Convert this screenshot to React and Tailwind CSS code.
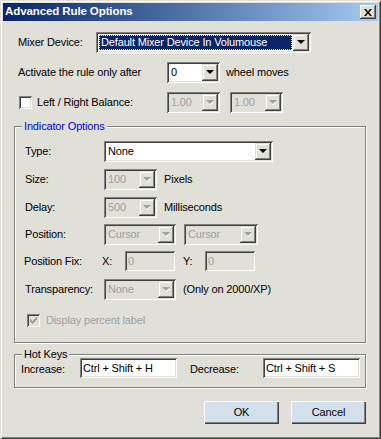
import React from "react";

const BG = "bg-[#e0dfd8]";

function Arrow({ disabled }) {
  return (
    <svg width="8" height="5" viewBox="0 0 8 5" className="block">
      {disabled && <path d="M2 2h5v1h-1v1h-1v1h-1z" fill="#ffffff" />}
      <path d="M0.5 0h7v1h-1v1h-1v1h-1v1h-1v-1h-1v-1h-1v-1h-1z" fill={disabled ? "#a0a0a0" : "#000"} />
    </svg>
  );
}

function DropBtn({ disabled }) {
  return (
    <div className="w-[16px] h-full bg-[#e0dfd8] flex items-center justify-center shadow-[inset_-1px_-1px_0_#404040,inset_1px_1px_0_#e0dfd8,inset_-2px_-2px_0_#808080,inset_2px_2px_0_#ffffff]">
      <Arrow disabled={disabled} />
    </div>
  );
}

const sunken =
  "shadow-[inset_1px_1px_0_#808080,inset_-1px_-1px_0_#ffffff,inset_2px_2px_0_#404040,inset_-2px_-2px_0_#e0dfd8] p-[2px]";

function Combo({ w, value, disabled, selected }) {
  return (
    <div
      className={`${sunken} h-[21px] flex shrink-0 ${disabled ? "bg-[#e0dfd8]" : "bg-white"}`}
      style={{ width: w }}
    >
      <div className="flex-1 min-w-0 flex items-center">
        {selected ? (
          <div className="ml-[1px] mr-[1px] h-[15px] flex-1 bg-[#0a246a] border border-dotted border-[#e8e0a0] text-white flex items-center pl-[1px] leading-none whitespace-nowrap overflow-hidden">
            {value}
          </div>
        ) : (
          <span className={`pl-[2px] leading-none whitespace-nowrap ${disabled ? "text-[#a0a0a0]" : "text-black"}`}>
            {value}
          </span>
        )}
      </div>
      <DropBtn disabled={disabled} />
    </div>
  );
}

function TextBox({ w, value, disabled }) {
  return (
    <div
      className={`${sunken} h-[20px] flex items-center shrink-0 ${disabled ? "bg-[#e0dfd8] text-[#a0a0a0]" : "bg-white text-black"}`}
      style={{ width: w }}
    >
      <span className="pl-[1px] leading-none whitespace-nowrap">{value}</span>
    </div>
  );
}

function Check({ checked, disabled }) {
  return (
    <div
      className={`w-[13px] h-[13px] shrink-0 flex items-center justify-center shadow-[inset_1px_1px_0_#808080,inset_-1px_-1px_0_#ffffff,inset_2px_2px_0_#404040,inset_-2px_-2px_0_#e0dfd8] ${disabled ? "bg-[#e0dfd8]" : "bg-white"}`}
    >
      {checked && (
        <svg width="7" height="7" viewBox="0 0 7 7" className="block">
          <path d="M0 2h1v1h1v1h1v-1h1v-1h1v-1h1v-1h1v3h-1v1h-1v1h-1v1h-1v1h-1v-1h-1v-1h-1z" fill={disabled ? "#a0a0a0" : "#000"} />
        </svg>
      )}
    </div>
  );
}

function Button({ children }) {
  return (
    <div className="w-[75px] h-[23px] bg-[#d4e0ec] flex items-center justify-center text-black shadow-[inset_1px_1px_0_#ffffff,inset_-1px_-1px_0_#404040,inset_-2px_-2px_0_#808080]">
      {children}
    </div>
  );
}

export default function App() {
  return (
    <div
      className={`w-[381px] h-[439px] ${BG} p-[3px] shadow-[inset_1px_1px_0_#e0dfd8,inset_-1px_-1px_0_#404040,inset_2px_2px_0_#ffffff,inset_-2px_-2px_0_#808080] text-[11px] tracking-[-0.15px] text-black`}
      style={{ fontFamily: '"Liberation Sans", Arial, sans-serif' }}
    >
      {/* Title bar */}
      <div className="h-[18px] bg-gradient-to-r from-[#0a246a] to-[#a6caf0] flex items-center justify-between pl-[2px] pr-[2px]">
        <span className="text-white font-bold text-[11.5px] tracking-[-0.1px] leading-none">Advanced Rule Options</span>
        <div className="w-[16px] h-[14px] bg-[#e0dfd8] flex items-center justify-center shadow-[inset_-1px_-1px_0_#404040,inset_1px_1px_0_#ffffff,inset_-2px_-2px_0_#808080]">
          <svg width="8" height="7" viewBox="0 0 8 7" className="block">
            <path d="M0 0h2l2 2.5L6 0h2L5 3.5 8 7H6L4 4.5 2 7H0l3-3.5z" fill="#000" />
          </svg>
        </div>
      </div>

      {/* Row 1 */}
      <div className="mt-[11px] h-[21px] flex items-center ml-[15px]">
        <span className="w-[78px] shrink-0">Mixer Device:</span>
        <Combo w={215} value="Default Mixer Device In Volumouse" selected />
      </div>

      {/* Row 2 */}
      <div className="mt-[9px] h-[21px] flex items-center ml-[15px]">
        <span className="w-[149px] shrink-0">Activate the rule only after</span>
        <Combo w={53} value="0" />
        <span className="ml-[6px]">wheel moves</span>
      </div>

      {/* Row 3 */}
      <div className="mt-[9px] h-[21px] flex items-center ml-[16px]">
        <Check />
        <span className="ml-[5px] w-[130px] shrink-0">Left / Right Balance:</span>
        <Combo w={53} value="1.00" disabled />
        <div className="ml-[10px]">
          <Combo w={53} value="1.00" disabled />
        </div>
      </div>

      {/* Indicator Options group */}
      <div className="relative mt-[13px] ml-[11px] w-[352px] h-[217px] border border-[#808080] shadow-[inset_1px_1px_0_#ffffff,1px_1px_0_#ffffff] pt-[14px] pl-[10px]">
        <span className={`absolute -top-[7px] left-[7px] px-[2px] ${BG} text-[#0000ff] leading-[13px]`}>
          Indicator Options
        </span>
        <div className="h-[21px] flex items-center">
          <span className="w-[79px] shrink-0">Type:</span>
          <Combo w={169} value="None" />
        </div>
        <div className="mt-[7px] h-[21px] flex items-center">
          <span className="w-[79px] shrink-0">Size:</span>
          <Combo w={53} value="100" disabled />
          <span className="ml-[7px]">Pixels</span>
        </div>
        <div className="mt-[7px] h-[21px] flex items-center">
          <span className="w-[79px] shrink-0">Delay:</span>
          <Combo w={53} value="500" disabled />
          <span className="ml-[7px]">Milliseconds</span>
        </div>
        <div className="mt-[6px] h-[21px] flex items-center">
          <span className="w-[79px] shrink-0">Position:</span>
          <Combo w={72} value="Cursor" disabled />
          <div className="ml-[8px]">
            <Combo w={74} value="Cursor" disabled />
          </div>
        </div>
        <div className="mt-[6px] h-[20px] flex items-center">
          <span className="w-[78px] shrink-0 -ml-[1px] mr-[1px]">Position Fix:</span>
          <span className="w-[22px] shrink-0 -ml-[1px] mr-[1px]">X:</span>
          <TextBox w={50} value="0" disabled />
          <span className="ml-[8px] w-[22px] shrink-0">Y:</span>
          <TextBox w={50} value="0" disabled />
        </div>
        <div className="mt-[8px] h-[21px] flex items-center">
          <span className="w-[79px] shrink-0">Transparency:</span>
          <Combo w={72} value="None" disabled />
          <span className="ml-[7px]">(Only on 2000/XP)</span>
        </div>
        <div className="mt-[10px] h-[21px] flex items-center ml-[2px]">
          <Check checked disabled />
          <span className="ml-[6px] text-[#a0a0a0]">Display percent label</span>
        </div>
      </div>

      {/* Hot Keys group */}
      <div className="relative mt-[11px] ml-[11px] w-[352px] h-[34px] border border-[#808080] shadow-[inset_1px_1px_0_#ffffff,1px_1px_0_#ffffff] pt-[3px] pl-[6px]">
        <span className={`absolute -top-[7px] left-[7px] px-[2px] ${BG} leading-[13px]`}>Hot Keys</span>
        <div className="h-[20px] flex items-center">
          <span className="w-[59px] shrink-0 pt-[3px]">Increase:</span>
          <TextBox w={97} value="Ctrl + Shift + H" />
          <span className="ml-[13px] w-[73px] shrink-0 pt-[3px]">Decrease:</span>
          <TextBox w={97} value="Ctrl + Shift + S" />
        </div>
      </div>

      {/* Buttons */}
      <div className="mt-[13px] flex justify-end gap-[12px] mr-[12px]">
        <Button>OK</Button>
        <Button>Cancel</Button>
      </div>
    </div>
  );
}
